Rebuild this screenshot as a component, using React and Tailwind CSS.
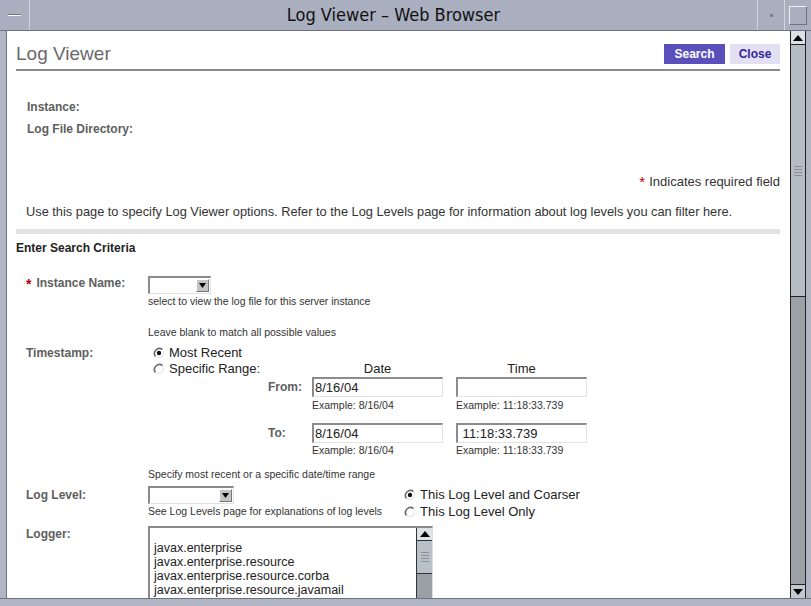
import React from "react";

const Radio = ({ checked }) => (
  <svg width="12" height="12" viewBox="0 0 12 12" className="shrink-0">
    <path d="M9.5 2.5 A5 5 0 0 0 2.5 9.5" stroke="#6b6b6b" strokeWidth="1.6" fill="none" />
    <path d="M9.5 2.5 A5 5 0 0 1 2.5 9.5" stroke="#e8e8e8" strokeWidth="1.2" fill="none" />
    {checked && <circle cx="6" cy="6" r="2.2" fill="#111" />}
  </svg>
);

const Arrow = ({ up }) => (
  <svg width="10" height="6" viewBox="0 0 10 6">
    <path d={up ? "M0 6 L5 0 L10 6 Z" : "M0 0 L5 6 L10 0 Z"} fill="#000" />
  </svg>
);

const Select = ({ width }) => (
  <div
    className={`flex h-[18px] items-center justify-end border-t-2 border-l-2 border-t-[#8a8a8a] border-l-[#8a8a8a] border-r border-b border-r-[#e0e0e0] border-b-[#e0e0e0] bg-white ${width}`}
  >
    <div className="mr-[1px] flex h-[13px] w-[13px] items-center justify-center border border-t-white border-l-white border-r-[#777] border-b-[#777] bg-[#c4c4c4]">
      <svg width="7" height="5" viewBox="0 0 7 5">
        <path d="M0 0 L3.5 5 L7 0 Z" fill="#000" />
      </svg>
    </div>
  </div>
);

const TextBox = ({ value }) => (
  <div className="flex h-[20px] w-[131px] items-center whitespace-pre border-t-2 border-l-2 border-t-[#8c8c8c] border-l-[#8c8c8c] border-r border-b border-r-[#e2e2e2] border-b-[#e2e2e2] bg-white px-[1px] text-[13px] text-[#222]">
    {value}
  </div>
);

const Label = ({ children, star }) => (
  <div className="w-[122px] shrink-0 text-[12px] font-bold text-[#5e5e5e]">
    {star && <span className="mr-[5px] align-top text-[14px] text-[#b00000]">*</span>}
    {children}
  </div>
);

const Help = ({ children, className = "" }) => (
  <div className={`text-[10.5px] leading-[12px] text-[#333] ${className}`}>{children}</div>
);

export default function App() {
  return (
    <div className="flex h-[606px] w-[811px] flex-col overflow-hidden bg-[#b0b6c4] font-['Liberation_Sans',Arial,sans-serif]">
      {/* title bar */}
      <div className="flex h-[31px] shrink-0 border-b border-b-[#6c7282] bg-[#a9afbf]">
        <div className="flex w-[30px] items-center justify-center border-r border-r-[#d0d4de]">
          <div className="h-[2px] w-[13px] border-t border-t-[#6e7484] border-b border-b-white" />
        </div>
        <div className="flex flex-1 items-center justify-center pb-[2px] font-['DejaVu_Sans_Condensed','Liberation_Sans',sans-serif] text-[18px] text-[#111]">
          Log Viewer – Web Browser
        </div>
        <div className="flex w-[27px] items-center justify-center border-l border-l-[#d0d4de]">
          <div className="h-[3px] w-[3px] bg-[#7a8090]" />
        </div>
        <div className="flex w-[27px] items-center justify-center border-l border-l-[#d0d4de]">
          <div className="h-[19px] w-[18px] border border-t-[#eef0f4] border-l-[#eef0f4] border-r-[#6e7484] border-b-[#6e7484]" />
        </div>
      </div>

      <div className="flex min-h-0 flex-1">
        <div className="w-[7px] shrink-0 border-r border-r-[#6c7282] bg-[#b0b6c4]" />
        {/* content */}
        <div className="min-w-0 flex-1 overflow-hidden bg-white pl-[9px] pr-[10px] pt-[13px]">
          <div className="flex h-[20px] items-center justify-between">
            <div className="text-[19px] leading-[20px] text-[#6a6a6a]">Log Viewer</div>
            <div className="flex h-full gap-[5px]">
              <div className="flex w-[61px] items-center justify-center bg-[#5a4fbb] text-[12px] font-bold text-white">
                Search
              </div>
              <div className="flex w-[50px] items-center justify-center bg-[#e2e0f2] text-[12px] font-bold text-[#33269a]">
                Close
              </div>
            </div>
          </div>
          <div className="mt-[5px] h-[2px] bg-[#8a8a8a]" />

          <div className="mt-[25px] pl-[11px] text-[12px] font-bold leading-[22px] text-[#5e5e5e]">
            <div>Instance:</div>
            <div>Log File Directory:</div>
          </div>

          <div className="mt-[35px] flex h-[14px] items-center justify-end text-[13px] text-[#333]">
            <span className="mr-[4px] text-[15px] text-[#c00000]">*</span>
            Indicates required field
          </div>

          <div className="mt-[16px] h-[14px] whitespace-nowrap pl-[10px] text-[12.8px] leading-[14px] text-[#333]">
            Use this page to specify Log Viewer options. Refer to the Log Levels page for information about log levels you can filter here.
          </div>

          <div className="mt-[10px] h-[5px] bg-[#e3e3e3]" />

          <div className="mt-[7px] h-[14px] text-[12px] font-bold leading-[14px] text-[#222]">
            Enter Search Criteria
          </div>

          {/* Instance Name */}
          <div className="mt-[19px] flex items-center pl-[10px]">
            <Label star>Instance Name:</Label>
            <Select width="w-[63px]" />
          </div>
          <Help className="pl-[132px]">select to view the log file for this server instance</Help>

          <Help className="mt-[19px] pl-[132px]">Leave blank to match all possible values</Help>

          {/* Timestamp */}
          <div className="mt-[7px] flex pl-[10px]">
            <Label>
              <div className="leading-[16px]">Timestamp:</div>
            </Label>
            <div className="flex flex-col">
              <div className="flex h-[16px] items-center gap-[4px] whitespace-nowrap pl-[5px] text-[13px] text-[#222]">
                <Radio checked />
                Most Recent
              </div>
              <div className="flex">
                <div className="flex h-[16px] w-[107px] items-start gap-[4px] whitespace-nowrap pl-[5px] text-[13px] leading-[16px] text-[#222]">
                  <span className="mt-[2px]">
                    <Radio />
                  </span>
                  Specific Range:
                </div>
                <div className="grid grid-cols-[44px_131px_131px] gap-x-[13px] text-[#222]">
                  <div />
                  <div className="text-center text-[13px] leading-[16px]">Date</div>
                  <div className="text-center text-[13px] leading-[16px]">Time</div>

                  <div className="flex h-[20px] items-center pl-[13px] text-[12px] font-bold text-[#5e5e5e]">
                    From:
                  </div>
                  <TextBox value="8/16/04" />
                  <TextBox value="" />
                  <div />
                  <Help className="mt-[2px]">Example: 8/16/04</Help>
                  <Help className="mt-[2px]">Example: 11:18:33.739</Help>

                  <div className="mt-[12px] flex h-[20px] items-center pl-[13px] text-[12px] font-bold text-[#5e5e5e]">
                    To:
                  </div>
                  <div className="mt-[12px]">
                    <TextBox value="8/16/04" />
                  </div>
                  <div className="mt-[12px]">
                    <TextBox value=" 11:18:33.739" />
                  </div>
                  <div />
                  <Help className="mt-[1px]">Example: 8/16/04</Help>
                  <Help className="mt-[1px]">Example: 11:18:33.739</Help>
                </div>
              </div>
            </div>
          </div>

          <Help className="mt-[12px] pl-[132px]">Specify most recent or a specific date/time range</Help>

          {/* Log Level */}
          <div className="mt-[6px] flex pl-[10px]">
            <Label>
              <div className="leading-[18px]">Log Level:</div>
            </Label>
            <div className="flex flex-col">
              <Select width="w-[86px]" />
              <Help className="mt-[1px] whitespace-nowrap">See Log Levels page for explanations of log levels</Help>
            </div>
            <div className="ml-[22px] flex flex-col text-[13px] text-[#222]">
              <div className="flex h-[17px] items-center gap-[4px] whitespace-nowrap">
                <Radio checked />
                This Log Level and Coarser
              </div>
              <div className="flex h-[17px] items-center gap-[4px] whitespace-nowrap">
                <Radio />
                This Log Level Only
              </div>
            </div>
          </div>

          {/* Logger */}
          <div className="mt-[6px] flex pl-[10px]">
            <Label>
              <div className="pt-[1px] leading-[14px]">Logger:</div>
            </Label>
            <div className="flex h-[90px] w-[285px] border-t-2 border-l-2 border-t-[#8a8a8a] border-l-[#8a8a8a] border-r border-r-[#e0e0e0] bg-white">
              <div className="flex-1 pl-[4px] pt-[13px] text-[12.5px] leading-[14px] text-[#222]">
                <div>javax.enterprise</div>
                <div>javax.enterprise.resource</div>
                <div>javax.enterprise.resource.corba</div>
                <div>javax.enterprise.resource.javamail</div>
              </div>
              <div className="flex w-[16px] flex-col border-l border-l-[#333] bg-[#9aa0a5]">
                <div className="flex h-[13px] items-center justify-center border-b border-b-[#333] bg-[#dfe3e8]">
                  <Arrow up />
                </div>
                <div className="flex h-[33px] flex-col items-center justify-center gap-[2px] border-b border-b-[#333] bg-[#b8c0c8]">
                  <div className="h-px w-[8px] bg-[#8a9096]" />
                  <div className="h-px w-[8px] bg-[#8a9096]" />
                  <div className="h-px w-[8px] bg-[#8a9096]" />
                  <div className="h-px w-[8px] bg-[#8a9096]" />
                </div>
              </div>
            </div>
          </div>
        </div>

        {/* scrollbar */}
        <div className="flex w-[16px] shrink-0 flex-col border-l border-r border-l-[#222] border-r-[#222] bg-[#9ba1a6]">
          <div className="flex h-[14px] items-center justify-center border-b border-b-[#222] bg-[#dde1e6]">
            <Arrow up />
          </div>
          <div className="flex h-[252px] flex-col items-center justify-center gap-[2px] border-b border-b-[#222] bg-[#b4bcc4]">
            <div className="h-px w-[8px] bg-[#8a9096]" />
            <div className="h-px w-[8px] bg-[#8a9096]" />
            <div className="h-px w-[8px] bg-[#8a9096]" />
            <div className="h-px w-[8px] bg-[#8a9096]" />
          </div>
          <div className="flex-1" />
          <div className="flex h-[14px] items-center justify-center border-t border-t-[#222] bg-[#c4c9cf]">
            <Arrow />
          </div>
        </div>
        <div className="w-[5px] shrink-0 bg-[#b0b6c4]" />
      </div>
      <div className="h-[8px] shrink-0 border-t border-t-[#6c7282] bg-[#b0b6c4]" />
    </div>
  );
}
